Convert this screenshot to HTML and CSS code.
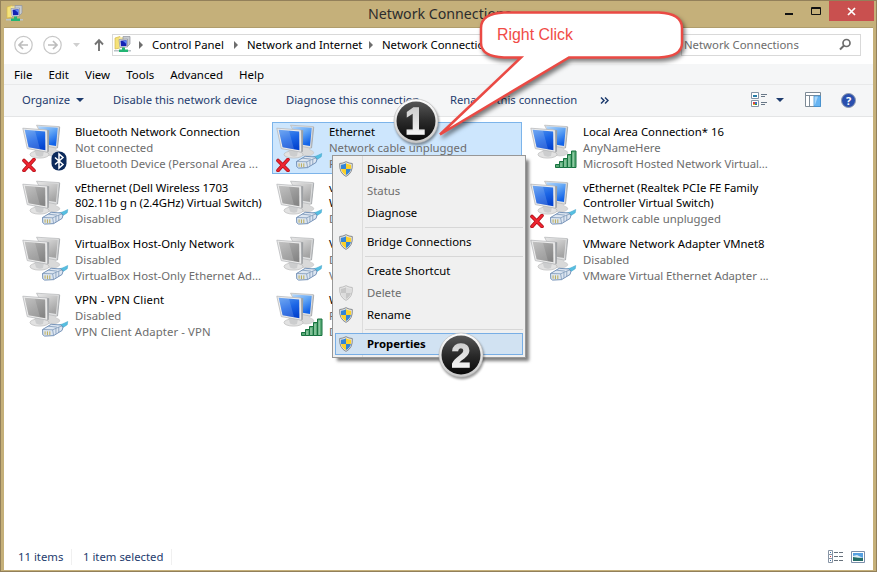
FILE: index.html
```
<!DOCTYPE html>
<html lang="en">
<head>
<meta charset="utf-8">
<title>Network Connections</title>
<link rel="stylesheet" href="styles.css">
</head>
<body>
<svg class="defs" width="0" height="0" aria-hidden="true">
  <defs>
    <linearGradient id="blue" x1=".2" y1="0" x2=".6" y2="1"><stop offset="0" stop-color="#4f92ee"/><stop offset=".5" stop-color="#1c66e6"/><stop offset="1" stop-color="#0443cf"/></linearGradient>
    <linearGradient id="sky" x1="0" y1="0" x2=".6" y2="1"><stop offset="0" stop-color="#b9dafb"/><stop offset=".5" stop-color="#62a6f5"/><stop offset="1" stop-color="#1263e8"/></linearGradient>
    <linearGradient id="gray" x1=".1" y1="0" x2=".7" y2="1"><stop offset="0" stop-color="#b4b4b4"/><stop offset=".5" stop-color="#9b9b9b"/><stop offset="1" stop-color="#868686"/></linearGradient>
    <linearGradient id="pale" x1="0" y1="0" x2=".6" y2="1"><stop offset="0" stop-color="#e6e6e6"/><stop offset="1" stop-color="#a4a4a4"/></linearGradient>
    <linearGradient id="ball" x1="0" y1="0" x2="0" y2="1"><stop offset="0" stop-color="#565656"/><stop offset=".5" stop-color="#2a2a2a"/><stop offset="1" stop-color="#080808"/></linearGradient>
    <linearGradient id="ring" x1="0" y1="0" x2="0" y2="1"><stop offset="0" stop-color="#fff"/><stop offset="1" stop-color="#c9c9c9"/></linearGradient>
    <linearGradient id="numeral" x1="0" y1="0" x2="0" y2="1"><stop offset="0" stop-color="#c4c4c4"/><stop offset="1" stop-color="#fff"/></linearGradient>
    <symbol id="monitors" viewBox="0 0 48 50">
      <path d="M26 22h7l1 4q4 1 4 3q-2 3-8 3t-8-3z" fill="#d9d9d9" stroke="#c2c2c2" stroke-width=".5"/>
      <path d="M14.500 1.200L37.300 2.600L35 24.200L26 22.500Z" fill="#dfe0e1" stroke="#b4b6b8" stroke-width=".7"/>
      <path d="M16 2.300L35.800 3.800L34 22L26.500 20.700L25 6L17 5Z" fill="var(--back)"/>
      <path d="M37.300 2.600L38.200 3.200L36 24L35 24.200Z" fill="#a9acaf"/>
      <ellipse cx="17.500" cy="30.500" rx="9.500" ry="3.600" fill="#e2e2e2" stroke="#bababa" stroke-width=".7"/>
      <path d="M12 24L22 27L21 32Q17 33.500 14 31.500Z" fill="#cccdce"/>
      <path d="M.8 4.200L25.300 6L25.600 28.200L5.300 24.600Z" fill="#ececec" stroke="#b0b2b4" stroke-width=".7"/>
      <path d="M25.300 6L27.200 6.300L26.800 27.500L25.600 28.200Z" fill="#9da0a3"/>
      <path d="M2.700 5.800L23.200 7.400L23.400 26.200L6.600 23.200Z" fill="var(--front)"/>
      <path d="M2.700 5.800L13 6.600L18 25.200L6.600 23.200Z" fill="#fff" opacity=".16"/>
    </symbol>
    <symbol id="cable" viewBox="0 0 28 18">
      <path d="M17 4.500Q21 4 27.500 .5L27 4Q24 6 20.500 8Z" fill="#55bfe2" stroke="#3a9cc4" stroke-width=".5"/>
      <path d="M.8 9L10 3.500L20 4.200L22.500 6.500L21.500 10L12.500 15.500L3 16L1 14.500Z" fill="#dde6f1" stroke="#6283ad" stroke-width=".9"/>
      <path d="M.8 9L11.500 9.300L21.500 5M11.500 9.300L12.500 15.500M7 5.500L16 6.500M15 8V13.500M18 6.500V12" fill="none" stroke="#7793b4" stroke-width=".8"/>
      <path d="M3.500 11V14.500M6 11V15M8.500 11V15" stroke="#b9a94f"/>
    </symbol>
    <symbol id="cross" viewBox="0 0 14 14">
      <path d="M2 2.500L12 12.500M12 1.500L2 12.500" stroke="#a90b13" stroke-width="3.600" stroke-linecap="round"/>
      <path d="M2 2.500L12 12.500M12 1.500L2 12.500" stroke="#ee2530" stroke-width="2.300" stroke-linecap="round"/>
    </symbol>
    <symbol id="signal" viewBox="0 0 22 18">
      <path d="M.5 14.500h4v3h-4zM4.500 11.500h4v6h-4zM8.500 8.500h4v9h-4zM12.500 4.500h4v13h-4zM16.500 1h4.500v16.500h-4.500z" fill="#58aa76" stroke="#187340"/>
      <path d="M6 13v4M10 10v7M14 6v11M18.200 2.500v14.500" stroke="#a9d6b7"/>
    </symbol>
    <symbol id="bluetooth" viewBox="0 0 16 20">
      <rect x=".5" y=".5" width="15" height="19" rx="7" fill="#0c2a5c"/>
      <path d="M4 6.500L12 13.500L8 17V3L12 6.500L4 13.500" fill="none" stroke="#fff" stroke-width="1.500"/>
    </symbol>
    <symbol id="shield" viewBox="0 0 14 16">
      <path d="M7 .7Q10 2.400 13.300 2.500Q14 12 7 15.400Q0 12 .7 2.500Q4 2.400 7 .7Z" fill="#e9e9e9" stroke="var(--rim)" stroke-width="1"/>
      <path fill="var(--sa)" d="M7 2.300V8H2.100Q1.700 6 2 3.700Q5 3.600 7 2.300ZM7 8H11.900Q11 12 7 14Z"/>
      <path fill="var(--sb)" d="M7 2.300V8H11.900Q12.300 6 12 3.700Q9 3.600 7 2.300ZM7 8H2.100Q3 12 7 14Z"/>
    </symbol>
    <symbol id="netfolder" viewBox="0 0 17 17">
      <path d="M1 2L6 .5V12L1 13Z" fill="#f5e279" stroke="#d4b84b" stroke-width=".7"/>
      <path d="M5 1.500L10 1V12H5Z" fill="#f8eaa0"/>
      <path d="M9 .5H16V8L14 10H9Z" fill="#c8ccd2" stroke="#8f949c" stroke-width=".7"/>
      <path d="M5 3.500L13.500 3V11L6 11.500Z" fill="#dfe2e8" stroke="#90949e" stroke-width=".7"/>
      <path d="M6.500 4.700L12.500 4.300V9.900L7 10.200Z" fill="#1422b4"/>
      <path d="M9 5L12.500 4.300V8Z" fill="#5a86f4"/>
      <path d="M8 11.500h3v2h3v2.500H5V13.500h3z" fill="#22b573"/>
      <path d="M0 14.800h5M14 14.800h3" stroke="#bac3c8" stroke-width="1.500"/>
    </symbol>
  </defs>
</svg>

<div class="window">
  <header class="titlebar">
    <svg class="app-icon" viewBox="0 0 17 17"><use href="#netfolder"/></svg>
    <h1 class="title">Network Connections</h1>
    <div class="controls">
      <svg width="26" height="21"><path d="M8 13h8" stroke="#111" stroke-width="2"/></svg>
      <svg width="26" height="21"><path d="M8.500 6.500h9v7h-9zM8 7.500h10" fill="none" stroke="#111"/></svg>
      <span class="close"><svg width="45" height="20"><path d="M19 7L26 14M26 7L19 14" stroke="#fff" stroke-width="1.700"/></svg></span>
    </div>
  </header>

  <main class="client">
    <nav class="address">
      <svg class="nav-icons" width="103" height="32" fill="none">
        <g stroke="#c7c7c7" stroke-width="1.200"><circle cx="19.500" cy="16" r="8.700"/><circle cx="48.500" cy="16" r="8.700"/></g>
        <path d="M24 16H15.500M19 12L15 16L19 20M44 16H52.500M49 12L53 16L49 20" stroke="#bcbcbc" stroke-width="1.700"/>
        <path d="M69 14h7l-3.500 4z" fill="#cfcfcf"/>
        <path d="M95 22V11.500M91 15.500L95 11.200L99 15.500" stroke="#737373" stroke-width="1.900"/>
      </svg>
      <div class="path">
        <svg class="path-icon" viewBox="0 0 17 17"><use href="#netfolder"/></svg>
        <i class="chev"></i><span class="c1">Control Panel</span>
        <i class="chev"></i><span class="c2">Network and Internet</span>
        <i class="chev"></i><span class="c3">Network Connections</span>
      </div>
      <div class="search"><span>Network Connections</span>
        <svg width="13" height="13" fill="none" stroke="#6c6c6c"><circle cx="7.500" cy="5" r="3.500" stroke-width="1.700"/><path d="M5 7.500L1 11.500" stroke-width="2"/></svg>
      </div>
    </nav>
    <nav class="menubar"><span>File</span><span>Edit</span><span>View</span><span>Tools</span><span>Advanced</span><span>Help</span></nav>
    <div class="toolbar">
      <span class="t1">Organize<i class="caret"></i></span>
      <span class="t2">Disable this network device</span>
      <span class="t3">Diagnose this connection</span>
      <span class="t4">Rename this connection</span>
      <svg class="more" width="9" height="7" fill="none" stroke="#1e3c6e" stroke-width="1.500"><path d="M1 .5L4 3.500L1 6.500M5 .5L8 3.500L5 6.500"/></svg>
      <div class="tools">
        <svg width="16" height="16"><path d="M.5.500h7v6h-7zM.5 8.500h7v6h-7z" fill="#fff" stroke="#8595a6"/><path d="M2 3h4v2H2z" fill="#287da8"/><path d="M2 10h2v2H2z" fill="#d94343"/><path d="M4 10h2v2H4z" fill="#3a70c8"/><path d="M2 12h2v1H2z" fill="#e7ac22"/><path d="M4 12h2v1H4z" fill="#2d9847"/><path d="M10 2.500h6M10 4.500h4M10 10.500h6M10 12.500h4" stroke="#687787"/></svg>
        <i class="caret"></i>
        <svg class="pane" width="16" height="16"><path d="M.5.500h15v14h-15zM0 3.500h16M4.500 3v12M9.500 3v12" fill="#fff" stroke="#7d8a96"/><path d="M9 4h6.500v10.500H9z" fill="#67b4f2" stroke="#3f8fd0" stroke-width=".8"/><path d="M9.500 4.500h3.500L9.500 14z" fill="#aad7fa"/></svg>
        <span class="help">?</span>
      </div>
    </div>

    <section class="content">
      <div class="grid">
        <article class="item">
          <div class="icon"><svg class="mon"><use href="#monitors"/></svg><svg class="x"><use href="#cross"/></svg><svg class="bt"><use href="#bluetooth"/></svg></div>
          <div class="text"><b>Bluetooth Network Connection</b><span>Not connected</span><span>Bluetooth Device (Personal Area ...</span></div>
        </article>
        <article class="item selected">
          <div class="icon"><svg class="mon"><use href="#monitors"/></svg><svg class="x"><use href="#cross"/></svg><svg class="cab"><use href="#cable"/></svg></div>
          <div class="text"><b>Ethernet</b><span>Network cable unplugged</span><span>R</span></div>
        </article>
        <article class="item">
          <div class="icon"><svg class="mon"><use href="#monitors"/></svg><svg class="sig"><use href="#signal"/></svg></div>
          <div class="text"><b>Local Area Connection* 16</b><span>AnyNameHere</span><span class="tight">Microsoft Hosted Network Virtual...</span></div>
        </article>
        <article class="item off">
          <div class="icon"><svg class="mon"><use href="#monitors"/></svg><svg class="cab"><use href="#cable"/></svg></div>
          <div class="text"><b class="tight">vEthernet (Dell Wireless 1703<br>802.11b g n (2.4GHz) Virtual Switch)</b><span>Disabled</span></div>
        </article>
        <article class="item off">
          <div class="icon"><svg class="mon"><use href="#monitors"/></svg><svg class="cab"><use href="#cable"/></svg></div>
          <div class="text"><b>v<br>W</b><span>D</span></div>
        </article>
        <article class="item">
          <div class="icon"><svg class="mon"><use href="#monitors"/></svg><svg class="x"><use href="#cross"/></svg><svg class="cab"><use href="#cable"/></svg></div>
          <div class="text"><b class="tight">vEthernet (Realtek PCIe FE Family<br>Controller Virtual Switch)</b><span>Network cable unplugged</span></div>
        </article>
        <article class="item off">
          <div class="icon"><svg class="mon"><use href="#monitors"/></svg><svg class="cab"><use href="#cable"/></svg></div>
          <div class="text"><b>VirtualBox Host-Only Network</b><span>Disabled</span><span>VirtualBox Host-Only Ethernet Ad...</span></div>
        </article>
        <article class="item off">
          <div class="icon"><svg class="mon"><use href="#monitors"/></svg><svg class="cab"><use href="#cable"/></svg></div>
          <div class="text"><b>V</b><span>D</span><span>V</span></div>
        </article>
        <article class="item off">
          <div class="icon"><svg class="mon"><use href="#monitors"/></svg><svg class="cab"><use href="#cable"/></svg></div>
          <div class="text"><b>VMware Network Adapter VMnet8</b><span>Disabled</span><span class="tight">VMware Virtual Ethernet Adapter ...</span></div>
        </article>
        <article class="item off">
          <div class="icon"><svg class="mon"><use href="#monitors"/></svg><svg class="cab"><use href="#cable"/></svg></div>
          <div class="text"><b class="wide">VPN - VPN Client</b><span>Disabled</span><span class="wide">VPN Client Adapter - VPN</span></div>
        </article>
        <article class="item">
          <div class="icon"><svg class="mon"><use href="#monitors"/></svg><svg class="sig"><use href="#signal"/></svg></div>
          <div class="text"><b>W</b><span>F</span><span>D</span></div>
        </article>
      </div>
    </section>

    <footer class="status">
      <span class="s1">11 items</span><span class="s2">1 item selected</span>
      <div class="views">
        <svg width="16" height="14"><path d="M.5.500h4v4h-4zM.5 4.500h4v4h-4zM.5 8.500h4v4h-4z" fill="#fff" stroke="#8794a5"/><path d="M2 2.500h1M2 10.500h1" stroke="#3b71a5"/><path d="M2 6.500h1" stroke="#d03838"/><path d="M6 2.500h4M11 2.500h4M6 6.500h4M11 6.500h4M6 10.500h4M11 10.500h4" stroke="#67717c"/></svg>
        <svg width="14" height="12"><path d="M.5.500h13v11H.5z" fill="#fff" stroke="#7b8eaa"/><path d="M2 2h10v8H2z" fill="#559fe0"/><path d="M2 5l4-1 6 3v2H2z" fill="#dcecf4"/><path d="M2 6q5 1 10 1v3H2z" fill="#246d67"/></svg>
      </div>
    </footer>
  </main>
</div>

<div class="menu">
  <div class="row"><svg><use href="#shield"/></svg><span>Disable</span></div>
  <div class="row dim"><span>Status</span></div>
  <div class="row"><span>Diagnose</span></div>
  <hr>
  <div class="row"><svg><use href="#shield"/></svg><span>Bridge Connections</span></div>
  <hr>
  <div class="row"><span>Create Shortcut</span></div>
  <div class="row dim"><svg><use href="#shield"/></svg><span>Delete</span></div>
  <div class="row"><svg><use href="#shield"/></svg><span>Rename</span></div>
  <hr>
  <div class="row hot"><svg><use href="#shield"/></svg><span>Properties</span></div>
</div>

<div class="callout">
  <svg width="220" height="140"><path d="M34 3.500H189Q212 4.500 212 19V34Q212 47.500 189 48.500H99L-30 125.500L51 48.500H34Q11 47.500 11 34V19Q11 4.500 34 3.500Z"/></svg>
  <span>Right Click</span>
</div>
<svg class="badge one" viewBox="0 0 46 46"><circle cx="23" cy="23" r="22" fill="url(#ring)" stroke="#bbb" stroke-width=".6"/><circle cx="23" cy="23" r="19.500" fill="url(#ball)"/><text x="22" y="36" text-anchor="middle">1</text></svg>
<svg class="badge two" viewBox="0 0 46 46"><circle cx="23" cy="23" r="22" fill="url(#ring)" stroke="#bbb" stroke-width=".6"/><circle cx="23" cy="23" r="19.500" fill="url(#ball)"/><text x="23" y="35" text-anchor="middle">2</text></svg>
</body>
</html>
```
FILE: styles.css
```
* { box-sizing: border-box; }
body {
  margin: 0;
  width: 877px;
  height: 572px;
  overflow: hidden;
  position: relative;
  font: 11.35px/16px "Noto Sans", "Open Sans", sans-serif;
  color: #000;
  --front: url(#blue);
  --back: url(#sky);
  --sa: #3385d6;
  --sb: #fcd12a;
  --rim: #85898d;
}
.defs { position: absolute; }
svg { flex: none; display: block; }
.window {
  height: 572px;
  background: #c5b07a;
  border: 1px solid #93805a;
  padding: 0 3px 1px;
  display: flex;
  flex-direction: column;
}
.titlebar { height: 26px; display: flex; margin-right: -1px; flex: none; }
.app-icon { width: 17px; height: 17px; margin: 4px 0 0 2px; }
.title {
  margin: 0;
  flex: 1;
  padding-left: 345px;
  font-size: 14.200px;
  font-weight: 400;
  line-height: 25px;
  color: #2c2c2c;
  white-space: nowrap;
}
.controls { display: flex; }
.close { background: #c9504f; height: 20px; width: 45px; }
.client { flex: 1; background: #fff; display: flex; flex-direction: column; border-top: 1px solid #b09d6c; }
.address { height: 36px; padding-bottom: 3px; display: flex; align-items: center; flex: none; }
.path {
  margin-left: 5px;
  width: 545px;
  height: 22px;
  border: 1px solid #d9d9d9;
  display: flex;
  align-items: center;
  white-space: nowrap;
}
.path-icon { width: 17px; height: 17px; margin-left: 1px; }
.chev { border: 4px solid transparent; border-left-color: #6d6d6d; border-right: 0; margin: 0 9px 0 8px; }
.path span { display: block; }
.c1 { width: 74px; }
.c2 { width: 114px; }
.search {
  width: 180px;
  margin-left: 24px;
  height: 22px;
  border: 1px solid #d9d9d9;
  background: #fff;
  color: #6d6d6d;
  display: flex;
  align-items: center;
  justify-content: space-between;
  padding: 0 8px 0 2px;
}
.menubar { height: 21px; background: #f5f6f7; border-bottom: 1px solid #e8e9ea; display: flex; font-size: 11.500px; line-height: 21px; padding-left: 10px; gap: 16px; flex: none; }
.toolbar {
  height: 32px;
  padding-bottom: 1px;
  background: #f5f6f7;
  border-bottom: 1px solid #e4e5e6;
  display: flex;
  align-items: center;
  color: #1e3c6e;
  padding-left: 18px;
  font-size: 11.250px;
  white-space: nowrap;
  flex: none;
}
.caret { display: inline-block; border: 4px solid transparent; border-top-color: #1e3c6e; border-bottom: 0; margin-left: 6px; vertical-align: 2px; }
.t1 { width: 91px; }
.t2 { width: 173px; }
.t3 { width: 164px; }
.t4 { width: 150px; }
.tools { display: flex; align-items: center; margin-left: 142px; }
.tools .caret { margin-left: 9px; }
.pane { margin-left: 21px; }
.help {
  width: 15px; height: 15px; margin-left: 20px;
  border-radius: 50%;
  border: 1px solid #8f9bb0;
  background: #2a4fae;
  color: #fff;
  font-size: 11px; font-weight: 700; line-height: 13px; text-align: center;
}
.content { flex: 1; padding: 5px 0 0 14px; }
.grid { display: grid; grid-template-columns: repeat(3, 254px); grid-auto-rows: 56px; }
.item { display: flex; height: 52px; width: 250px; padding: 1px 0 0 4px; white-space: nowrap; }
.selected { background: #cde6fd; outline: 1px solid #7cb4ea; outline-offset: -1px; }
.icon { width: 48px; height: 50px; position: relative; flex: none; }
.icon svg { position: absolute; }
.icon .mon { left: 0; top: 1px; width: 48px; height: 50px; }
.icon .x { left: 0; top: 35px; width: 14px; height: 14px; }
.icon .bt { left: 29px; top: 28px; width: 16px; height: 20px; }
.icon .cab { left: 19px; top: 30px; width: 28px; height: 17px; }
.icon .sig { left: 25px; top: 27px; width: 22px; height: 18px; }
.off { --front: url(#gray); --back: url(#pale); }
.text { padding-left: 5px; }
.text b { display: block; font-weight: 400; line-height: 15px; padding: 1px 0; }
.text span { display: block; color: #6d6d6d; }
.text .tight { letter-spacing: -.06px; }
.text .wide { letter-spacing: .1px; }
.status { height: 26px; display: flex; align-items: center; color: #1e3c6e; padding: 0 8px 0 14px; flex: none; }
.s1 { width: 54px; border-right: 1px solid #f0f0f0; }
.s2 { padding-left: 11px; width: 100px; border-right: 1px solid #f0f0f0; }
.views { margin-left: auto; display: flex; gap: 7px; align-items: center; }
.menu {
  position: absolute;
  left: 332px;
  top: 155px;
  width: 194px;
  height: 203px;
  border: 1px solid #979797;
  background: linear-gradient(90deg, transparent 29px, #dcdcdc 29px, #dcdcdc 30px, transparent 30px) #f0f0f0;
  box-shadow: 4px 4px 3px -1px rgba(0, 0, 0, .5);
  padding: 2px;
}
.row { height: 22px; display: flex; align-items: center; position: relative; padding-left: 32px; }
.row svg { position: absolute; left: 4px; top: 3px; width: 14px; height: 16px; }
.dim { color: #6d6d6d; --sa: #c6c6c6; --sb: #dcdcdc; --rim: #bdbdbd; }
.menu hr { margin: 3px 0 3px 30px; height: 1px; border: 0; background: #d7d7d7; }
.hot { font-weight: 700; background: #d1e2f2; outline: 1px solid #78aee5; outline-offset: -1px; }
.badge { position: absolute; width: 46px; height: 46px; filter: drop-shadow(1px 2px 1px rgba(0, 0, 0, .4)); }
.badge text { font: 700 36px "Liberation Sans", sans-serif; fill: url(#numeral); stroke: url(#numeral); stroke-width: 1.300; }
.one { left: 393px; top: 98px; }
.two { left: 438px; top: 332px; }
.two text { font-size: 34px; }
.callout { position: absolute; left: 470px; top: 9px; font: 15.900px/20px "Liberation Sans", sans-serif; color: #f04b46; }
.callout svg { overflow: visible; fill: #fff; stroke: #ea4a44; stroke-width: 2.500; filter: drop-shadow(2px 3px 2px rgba(0, 0, 0, .5)); }
.callout span { position: absolute; left: 27px; top: 16px; white-space: nowrap; }
```
